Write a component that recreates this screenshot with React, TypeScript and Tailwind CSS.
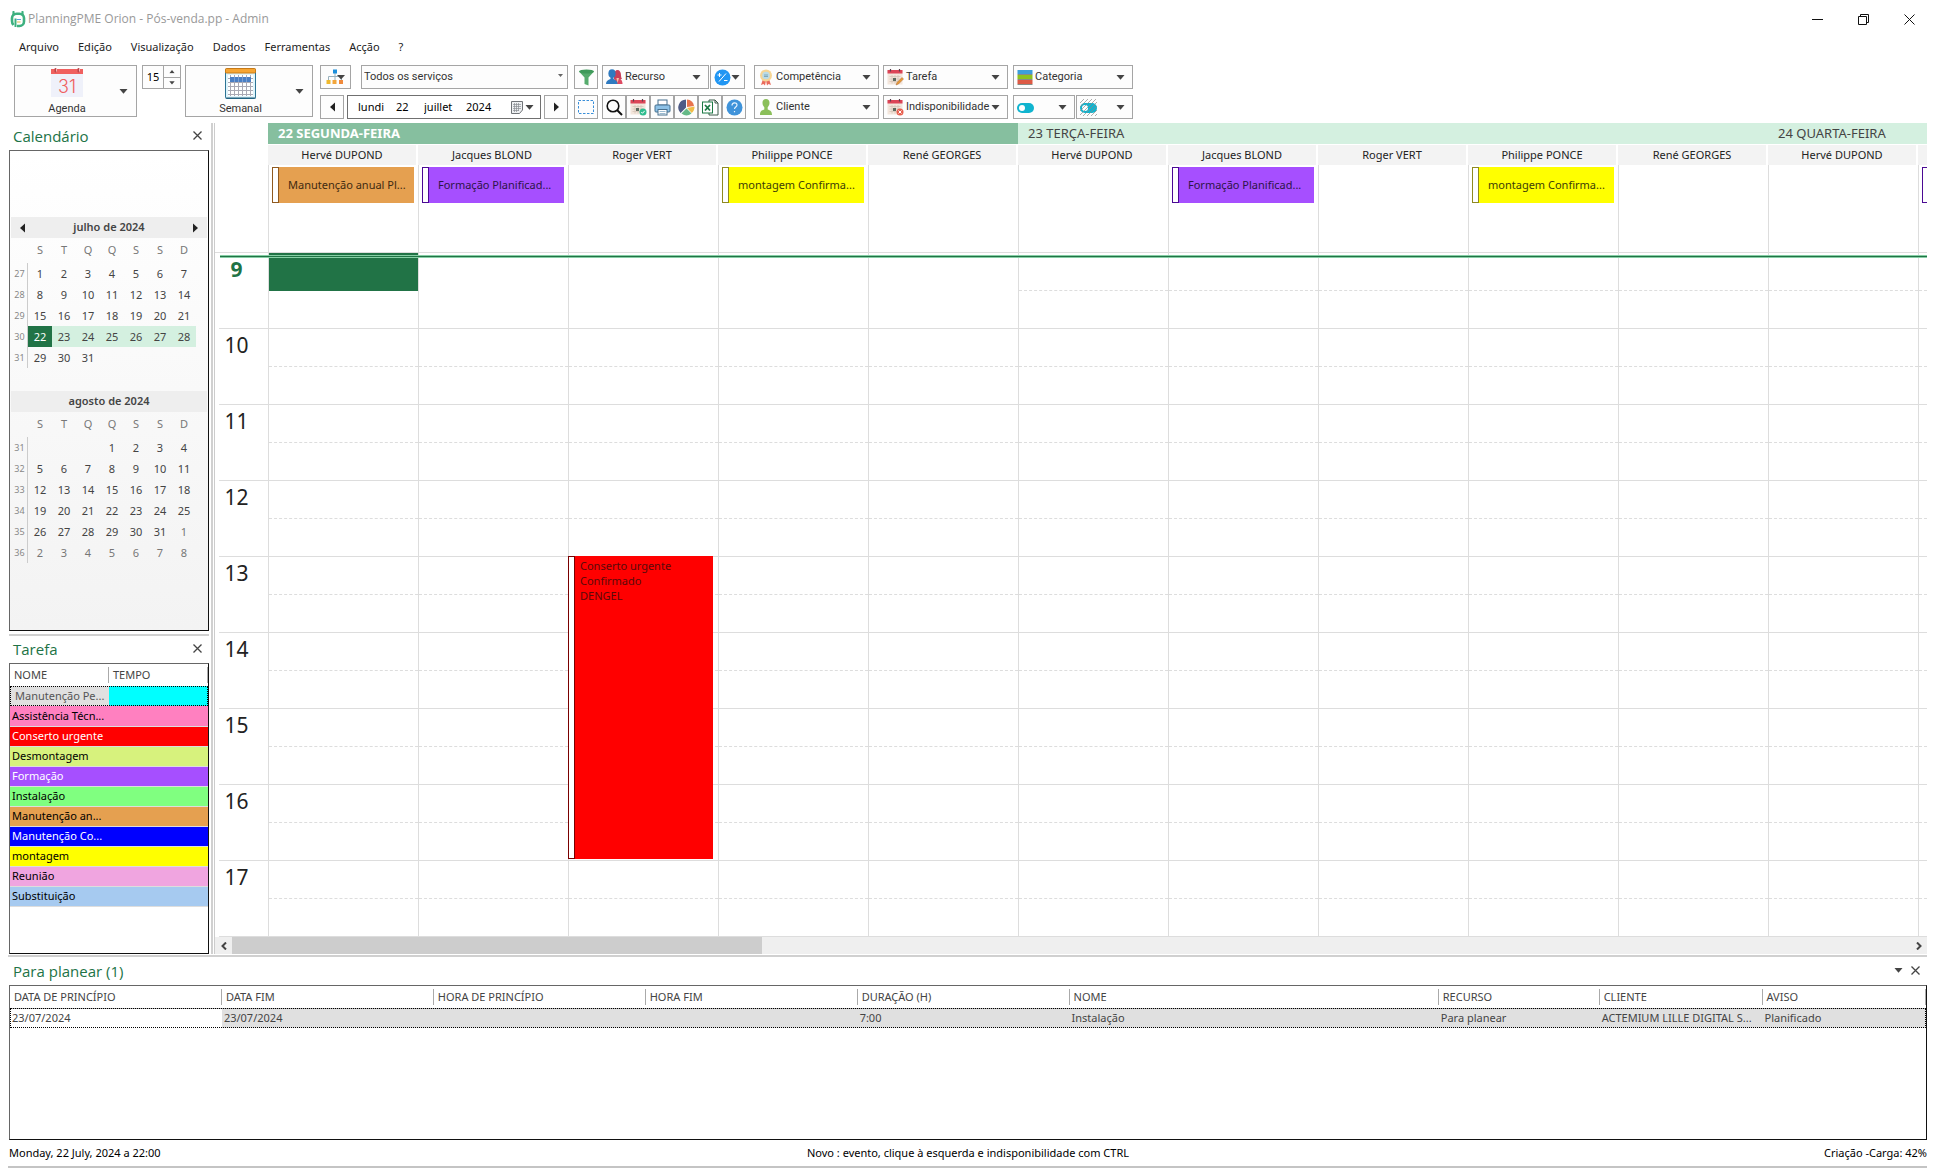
import React from 'react';

interface CalendarEvent {
  title: string;
  bg: string;
  border: string;
  text: string;
}

interface Task {
  name: string;
  className: string;
}

interface Week {
  number: number;
  days: string[];
}

const MENU = ['Arquivo', 'Edição', 'Visualização', 'Dados', 'Ferramentas', 'Acção', '?'];
const WEEKDAYS = ['S', 'T', 'Q', 'Q', 'S', 'S', 'D'];

const JULY: Week[] = [
  { number: 27, days: ['1', '2', '3', '4', '5', '6', '7'] },
  { number: 28, days: ['8', '9', '10', '11', '12', '13', '14'] },
  { number: 29, days: ['15', '16', '17', '18', '19', '20', '21'] },
  { number: 30, days: ['22', '23', '24', '25', '26', '27', '28'] },
  { number: 31, days: ['29', '30', '31', '', '', '', ''] },
];

const AUGUST: Week[] = [
  { number: 31, days: ['', '', '', '1', '2', '3', '4'] },
  { number: 32, days: ['5', '6', '7', '8', '9', '10', '11'] },
  { number: 33, days: ['12', '13', '14', '15', '16', '17', '18'] },
  { number: 34, days: ['19', '20', '21', '22', '23', '24', '25'] },
  { number: 35, days: ['26', '27', '28', '29', '30', '31', '1'] },
  { number: 36, days: ['2', '3', '4', '5', '6', '7', '8'] },
];

const TASKS: Task[] = [
  { name: 'Assistência Técn...', className: 'bg-[#ff80c0] text-black' },
  { name: 'Conserto urgente', className: 'bg-[#ff0000] text-white' },
  { name: 'Desmontagem', className: 'bg-[#d7f27d] text-black' },
  { name: 'Formação', className: 'bg-[#a64fff] text-white' },
  { name: 'Instalação', className: 'bg-[#80ff80] text-black' },
  { name: 'Manutenção an...', className: 'bg-[#e5a050] text-black' },
  { name: 'Manutenção Co...', className: 'bg-[#0000ff] text-white' },
  { name: 'montagem', className: 'bg-[#ffff00] text-black' },
  { name: 'Reunião', className: 'bg-[#f0a5e0] text-black' },
  { name: 'Substituição', className: 'bg-[#a6caf0] text-black' },
];

const MAINTENANCE: CalendarEvent = {
  title: 'Manutenção anual Pl...',
  bg: 'bg-[#e5a050]',
  border: 'border-[#8f5a20]',
  text: 'text-[#3f2a10]',
};
const TRAINING: CalendarEvent = {
  title: 'Formação Planificad...',
  bg: 'bg-[#a64fff]',
  border: 'border-[#4b0a94]',
  text: 'text-[#2d1548]',
};
const ASSEMBLY: CalendarEvent = {
  title: 'montagem Confirma...',
  bg: 'bg-[#ffff00]',
  border: 'border-[#8f8a20]',
  text: 'text-[#3d3d08]',
};

const COLUMNS: { resource: string; event?: CalendarEvent }[] = [
  { resource: 'Hervé DUPOND', event: MAINTENANCE },
  { resource: 'Jacques BLOND', event: TRAINING },
  { resource: 'Roger VERT' },
  { resource: 'Philippe PONCE', event: ASSEMBLY },
  { resource: 'René GEORGES' },
  { resource: 'Hervé DUPOND' },
  { resource: 'Jacques BLOND', event: TRAINING },
  { resource: 'Roger VERT' },
  { resource: 'Philippe PONCE', event: ASSEMBLY },
  { resource: 'René GEORGES' },
  { resource: 'Hervé DUPOND' },
  { resource: '', event: { ...TRAINING, title: '' } },
];

const HOURS = [9, 10, 11, 12, 13, 14, 15, 16, 17];

const Caret = ({ small = false }: { small?: boolean }) => (
  <svg width={small ? 6 : 9} height={small ? 4 : 5} viewBox="0 0 9 5" className="shrink-0" aria-hidden="true">
    <path d="M0.5 0h8L4.500 4.800z" fill="#444" />
  </svg>
);

const Arrow = ({ left = false }: { left?: boolean }) => (
  <svg width="5" height="10" viewBox="0 0 5 10" aria-hidden="true">
    <path d={left ? 'M5 0.500v9L0 5z' : 'M0 0.500v9L5 5z'} fill="#222" />
  </svg>
);

const CloseIcon = () => (
  <svg width="9" height="9" viewBox="0 0 9 9" aria-hidden="true">
    <path d="M0.500 0.500l8 8M8.500 0.500l-8 8" stroke="#444" strokeWidth="1.300" />
  </svg>
);

const LogoIcon = () => (
  <svg width="16" height="17" viewBox="0 0 16 17" aria-hidden="true">
    <path d="M3.500 14A6 6 0 0 1 2 10V7a4.500 4.500 0 0 1 4.500-4.200h3A4.500 4.500 0 0 1 14 7v3.500a4.500 4.500 0 0 1-4.500 4.500H7" fill="none" stroke="#3db07f" strokeWidth="2.600" />
    <path d="M3.500 1v3M12.500 1v3" stroke="#3db07f" strokeWidth="2.200" strokeLinecap="round" />
    <path d="M5.500 16V7.500" stroke="#3db07f" strokeWidth="2" />
    <path d="M7 11h3.500" stroke="#e2b84a" strokeWidth="1" />
    <path d="M6.500 8.500h4.500" stroke="#5ba4d4" strokeWidth="1" />
  </svg>
);

const AgendaIcon = () => (
  <svg width="32" height="29" viewBox="0 0 32 29" aria-hidden="true">
    <rect y="3" width="32" height="26" fill="#eff1fa" />
    <rect y="1" width="32" height="5" fill="#f0605f" />
    <path d="M4.500 1v2.500M27.500 1v2.500" stroke="#b8474c" strokeWidth="2" strokeLinecap="round" />
    <path d="M5.500 0.500v3M28.500 0.500v3" stroke="#f7b6b6" strokeWidth="1" />
    <text x="16" y="25" textAnchor="middle" fontSize="18" fontFamily="Inter, 'Liberation Sans', sans-serif" fontWeight="300" fill="#f0605f">31</text>
  </svg>
);

const WeekIcon = () => (
  <svg width="31" height="31" viewBox="0 0 31 31" aria-hidden="true">
    <rect x="0.500" y="1" width="30" height="29.500" rx="1" fill="#dff4fb" stroke="#2c7394" />
    <rect x="0.500" y="0.500" width="30" height="4.500" rx="1" fill="#f6a533" stroke="#c87a16" />
    <rect x="3" y="7" width="25" height="21" fill="#fff" />
    <path d="M3 10.500h25M3 14.500h25M3 18.500h25M3 22.500h25M3 26.500h25M5.500 7v21M9.500 7v21M13.500 7v21M17.500 7v21M21.500 7v21M25.500 7v21" stroke="#a9a9b4" strokeWidth="1" fill="none" />
    <rect x="5" y="9" width="21" height="5" fill="#4a7fc4" />
    <path d="M9.500 9v5M13.500 9v5M17.500 9v5M21.500 9v5" stroke="#7ba0d4" />
    <path d="M1 30h29.500" stroke="#1d5874" />
  </svg>
);

const TreeIcon = () => (
  <svg width="20" height="16" viewBox="0 0 20 16" aria-hidden="true">
    <path d="M2.500 11V7.500h13V11M9 3v8" stroke="#9bb2bd" fill="none" />
    <rect x="7" y="0.500" width="4" height="4" fill="#1c8fdc" />
    <rect x="0.500" y="11" width="4" height="4" fill="#efb92e" />
    <rect x="6.500" y="11" width="4" height="4" fill="#f2a63c" />
    <rect x="13" y="11" width="4" height="4" fill="#f08a3c" />
    <path d="M11 6h8l-4 4.500z" fill="#444" />
  </svg>
);

const FunnelIcon = () => (
  <svg width="17" height="17" viewBox="0 0 17 17" aria-hidden="true">
    <path d="M1 2.500l5.500 6V15l4 1.500v-8l5.500-6z" fill="#56ab6d" />
    <ellipse cx="8.500" cy="2.500" rx="7.500" ry="2" fill="#3f9a5a" />
  </svg>
);

const PeopleIcon = () => (
  <svg width="17" height="16" viewBox="0 0 17 16" className="shrink-0" aria-hidden="true">
    <path d="M8 6c0-3 1.500-5 3.500-5s3.500 2 3.500 5c0 2 .5 3 1 4H8z" fill="#c9405a" />
    <path d="M7 15c0-4 2-6 4.500-6s5 2 5 6z" fill="#dd4a62" />
    <path d="M10.500 9l1 5 1.500-5z" fill="#f3c7a8" />
    <ellipse cx="6" cy="4.500" rx="3.600" ry="4.300" fill="#2f7ac0" />
    <path d="M0 15c0-3 2-4 4.500-5V7h3v3c2 1 4 2 4 5z" fill="#2f7ac0" />
  </svg>
);

const PercentIcon = () => (
  <svg width="17" height="17" viewBox="0 0 17 17" className="shrink-0" aria-hidden="true">
    <circle cx="8.500" cy="8.500" r="8" fill="#2196f3" />
    <path d="M5 12.500l7-8M3.500 6h4M5.500 4v4M10 11.500h3.500" stroke="#fff" strokeWidth="1" />
  </svg>
);

const MedalIcon = () => (
  <svg width="16" height="17" viewBox="0 0 16 17" className="shrink-0" aria-hidden="true">
    <path d="M5 10l-2 6 2.500-1 1.500 1.500 1-5 1 5 1.500-1.500 2.500 1-2-6z" fill="#ea6b5c" />
    <circle cx="8" cy="6.500" r="6" fill="#f7d594" />
    <circle cx="8" cy="6.500" r="3.800" fill="#bcdbe6" />
    <path d="M6 6h4M6 7.500h4" stroke="#6f9cb0" strokeWidth="0.800" />
  </svg>
);

const SheetIcon = ({ badge }: { badge: 'ok' | 'edit' | 'deny' }) => (
  <svg width="17" height="17" viewBox="0 0 17 17" className="shrink-0" aria-hidden="true">
    <rect x="0.500" y="1.500" width="15" height="14" fill="#f3e6dc" />
    <rect x="0.500" y="1" width="15" height="3.500" fill="#dc4557" />
    <path d="M3.500 0v2.500M12.500 0v2.500" stroke="#5c3d4a" strokeWidth="1.200" />
    <path d="M2.500 7.500h11M2.500 10h11M2.500 12.500h11M5 6v8.500M8 6v8.500M11 6v8.500" stroke="#d5c5b8" strokeWidth="0.800" />
    <rect x="6" y="9" width="3" height="3" fill="#5d6b60" />
    {badge === 'ok' && (
      <>
        <circle cx="13" cy="13" r="3.500" fill="#2ebd8f" />
        <path d="M11.300 13l1.200 1.300 2.200-2.500" stroke="#fff" fill="none" />
      </>
    )}
    {badge === 'edit' && <path d="M9 16l1-2.500 5-5 1.500 1.500-5 5z" fill="#e99a35" stroke="#a86a3c" strokeWidth="0.500" />}
    {badge === 'deny' && (
      <>
        <circle cx="13" cy="13" r="3.500" fill="#e8604f" />
        <path d="M11.500 11.500l3 3M14.500 11.500l-3 3" stroke="#fff" />
      </>
    )}
  </svg>
);

const StackIcon = () => (
  <svg width="16" height="16" viewBox="0 0 16 16" className="shrink-0" aria-hidden="true">
    <rect x="0.500" y="1" width="15" height="4" fill="#3d9fda" />
    <rect x="0.500" y="6" width="15" height="4" fill="#8fc31f" />
    <rect x="0.500" y="11" width="15" height="4" fill="#dd5a45" />
    <path d="M0.500 5.500h15M0.500 10.500h15M0.500 15.500h15" stroke="#6b6f66" strokeWidth="0.800" />
  </svg>
);

const ClientIcon = () => (
  <svg width="16" height="16" viewBox="0 0 14 16" className="shrink-0" aria-hidden="true">
    <path d="M7 0c2.200 0 3.500 1.500 3.500 3.800 0 2-.7 3.500-1.800 4.400v2.300c2.300.8 4.300 1.500 4.300 5.500H1c0-4 2-4.700 4.300-5.500V8.200C4.200 7.300 3.500 5.800 3.500 3.800 3.500 1.500 4.800 0 7 0z" fill="#8bbf5a" />
  </svg>
);

const SwitchIcon = ({ hatched = false }: { hatched?: boolean }) => (
  <svg width="17" height="17" viewBox="0 0 17 17" className="shrink-0" aria-hidden="true">
    <rect y="4" width="17" height="10" rx="5" fill="#10b4cf" />
    <circle cx="5" cy="9" r="3" fill="#fff" />
    {hatched && (
      <path d="M0 4l4-4M0 8l8-8M0 12l12-12M0 16l16-16M3 17L17 3M7 17L17 7M11 17l6-6M15 17l2-2" stroke="#8a8a8a" strokeWidth="0.700" />
    )}
  </svg>
);

const MarqueeIcon = () => (
  <svg width="16" height="14" viewBox="0 0 16 14" aria-hidden="true">
    <rect x="0.500" y="0.500" width="15" height="13" fill="none" stroke="#3a8fd9" strokeDasharray="2.500 1.500" />
  </svg>
);

const SearchIcon = () => (
  <svg width="17" height="17" viewBox="0 0 17 17" aria-hidden="true">
    <circle cx="7" cy="7" r="5.800" fill="none" stroke="#111" strokeWidth="1.600" />
    <path d="M11 11l5 5" stroke="#111" strokeWidth="2" />
  </svg>
);

const PrinterIcon = () => (
  <svg width="17" height="17" viewBox="0 0 17 17" aria-hidden="true">
    <rect x="4" y="1" width="9" height="5" fill="#fff" stroke="#47708f" />
    <rect x="1" y="6" width="15" height="7" rx="1" fill="#8cc1e6" stroke="#47708f" />
    <rect x="4" y="10.500" width="9" height="5.500" fill="#fff" stroke="#47708f" />
    <path d="M5.500 12.500h6M5.500 14.500h6" stroke="#9bbbd1" />
  </svg>
);

const PieIcon = () => (
  <svg width="17" height="17" viewBox="0 0 17 17" aria-hidden="true">
    <path d="M9 8V0.500A7.800 7.800 0 0 1 16 7z" fill="#e8734c" />
    <path d="M8 8.500V0.500A8 8 0 0 0 2.500 14z" fill="#4f5b86" />
    <path d="M9 9l7.500-1.500a8 8 0 0 1-2.700 6.500z" fill="#f0bd48" />
    <path d="M8.500 9.500l5 5a8 8 0 0 1-10 0z" fill="#65b987" />
  </svg>
);

const ExcelIcon = () => (
  <svg width="17" height="17" viewBox="0 0 17 17" aria-hidden="true">
    <path d="M7 1h6l3 3v12H7z" fill="#fff" stroke="#3c5a4a" />
    <path d="M13 1v3h3" fill="none" stroke="#3c5a4a" />
    <rect x="0.500" y="3" width="10" height="11" fill="#fff" stroke="#1d7a45" />
    <path d="M3 6l5 5.500M8 6l-5 5.500" stroke="#1d7a45" strokeWidth="1.800" />
  </svg>
);

const HelpIcon = () => (
  <svg width="17" height="17" viewBox="0 0 17 17" aria-hidden="true">
    <circle cx="8.500" cy="8.500" r="8" fill="#3f93da" />
    <path d="M6 6.500c0-3.500 5-3.500 5-.5 0 2-2.500 2-2.500 4M8.500 12v1.300" fill="none" stroke="#e8f4ff" strokeWidth="1.200" />
  </svg>
);

const DateIcon = () => (
  <svg width="12" height="13" viewBox="0 0 12 13" className="shrink-0" aria-hidden="true">
    <path d="M0.500 0.500h11v8.500l-3 3.500h-8z" fill="#eef0f2" stroke="#707478" />
    <path d="M2 3.500h8M2 5.500h8M2 7.500h8M2 9.500h6M3.500 2v9M5.500 2v9M7.500 2v8" stroke="#8a8e94" strokeWidth="0.700" />
  </svg>
);

const toolBorder = 'border border-[#a5a5a5] bg-[#fdfdfd]';

const IconButton = ({ label, children }: { label: string; children: React.ReactNode }) => (
  <button aria-label={label} className={`flex h-6 w-6 items-center justify-center ${toolBorder}`}>
    {children}
  </button>
);

const DropButton = ({
  label,
  width,
  icon,
  showLabel = true,
}: {
  label: string;
  width: string;
  icon: React.ReactNode;
  showLabel?: boolean;
}) => (
  <button aria-haspopup="menu" aria-label={label} className={`flex h-6 items-center gap-0.5 pr-[7px] pl-[3px] ${width} ${toolBorder}`}>
    {icon}
    {showLabel && <span className="whitespace-nowrap">{label}</span>}
    <span className="ml-auto">
      <Caret />
    </span>
  </button>
);

const Toolbar = () => (
  <div className="flex items-start px-3.5 pt-2 font-[Roboto,sans-serif] text-[#333]">
    <button aria-haspopup="menu" className={`flex h-[52px] w-[123px] items-center pr-2 ${toolBorder}`}>
      <span className="flex flex-1 flex-col items-center pt-0.5">
        <AgendaIcon />
        <span className="mt-1 leading-4">Agenda</span>
      </span>
      <Caret />
    </button>
    <div className={`ml-[5px] flex h-6 w-[39px] ${toolBorder}`}>
      <input aria-label="Intervalo em minutos" defaultValue="15" className="w-5 min-w-0 flex-1 bg-transparent text-center font-['Noto_Sans',sans-serif] text-black outline-none" />
      <div className="flex w-[17px] flex-col border-l border-[#a5a5a5]">
        <button aria-label="Aumentar" className="flex flex-1 rotate-180 items-center justify-center">
          <Caret small />
        </button>
        <button aria-label="Diminuir" className="flex flex-1 items-center justify-center border-t border-[#a5a5a5]">
          <Caret small />
        </button>
      </div>
    </div>
    <button aria-haspopup="menu" className={`ml-1 flex h-[52px] w-32 items-center pr-2 ${toolBorder}`}>
      <span className="flex flex-1 flex-col items-center pt-0.5">
        <WeekIcon />
        <span className="mt-0.5 leading-4">Semanal</span>
      </span>
      <Caret />
    </button>

    <div className="ml-[7px] flex flex-col gap-1.5">
      <div className="flex gap-2.5">
        <button aria-label="Serviços" className={`flex h-6 w-[31px] items-center justify-center ${toolBorder}`}>
          <TreeIcon />
        </button>
        <div className={`relative flex h-6 w-[207px] items-center ${toolBorder}`}>
          <select aria-label="Serviço" className="h-full w-full appearance-none bg-transparent pl-0.5 outline-none">
            <option>Todos os serviços</option>
          </select>
          <span className="pointer-events-none absolute top-2 right-1">
            <svg width="5" height="3" viewBox="0 0 5 3" aria-hidden="true">
              <path d="M0 0h5L2.500 3z" fill="#666" />
            </svg>
          </span>
        </div>
      </div>
      <div className="flex gap-[3px]">
        <IconButton label="Anterior">
          <Arrow left />
        </IconButton>
        <div className="flex h-6 w-[194px] items-center gap-1 border border-[#707070] bg-white pr-1.5 pl-2.5 font-['Noto_Sans',sans-serif] text-black">
          <input aria-label="Dia da semana" defaultValue="lundi" className="w-[34px] bg-transparent outline-none" />
          <input aria-label="Dia" defaultValue="22" className="w-6 bg-transparent outline-none" />
          <input aria-label="Mês" defaultValue="juillet" className="w-[38px] bg-transparent outline-none" />
          <input aria-label="Ano" defaultValue="2024" className="w-9 bg-transparent outline-none" />
          <button aria-label="Abrir calendário" className="ml-auto flex items-center gap-0.5">
            <DateIcon />
            <Caret />
          </button>
        </div>
        <IconButton label="Seguinte">
          <Arrow />
        </IconButton>
      </div>
    </div>

    <div className="ml-1.5 flex flex-col gap-1.5">
      <div className="flex">
        <IconButton label="Filtro">
          <FunnelIcon />
        </IconButton>
        <div className="ml-1 flex gap-px">
          <DropButton label="Recurso" width="w-[107px]" icon={<PeopleIcon />} />
          <button aria-label="Percentagem" aria-haspopup="menu" className={`flex h-6 w-[35px] items-center pl-[3px] ${toolBorder}`}>
            <PercentIcon />
            <Caret />
          </button>
        </div>
      </div>
      <div className="flex">
        <IconButton label="Selecção">
          <MarqueeIcon />
        </IconButton>
        <div className="ml-1 flex">
          <IconButton label="Procurar">
            <SearchIcon />
          </IconButton>
          <IconButton label="Validar">
            <SheetIcon badge="ok" />
          </IconButton>
          <IconButton label="Imprimir">
            <PrinterIcon />
          </IconButton>
          <IconButton label="Estatísticas">
            <PieIcon />
          </IconButton>
          <IconButton label="Excel">
            <ExcelIcon />
          </IconButton>
          <IconButton label="Ajuda">
            <HelpIcon />
          </IconButton>
        </div>
      </div>
    </div>

    <div className="ml-2 flex flex-col gap-1.5">
      <DropButton label="Competência" width="w-[125px]" icon={<MedalIcon />} />
      <DropButton label="Cliente" width="w-[125px]" icon={<ClientIcon />} />
    </div>
    <div className="ml-1 flex flex-col gap-1.5">
      <DropButton label="Tarefa" width="w-[125px]" icon={<SheetIcon badge="edit" />} />
      <DropButton label="Indisponibilidade" width="w-[125px]" icon={<SheetIcon badge="deny" />} />
    </div>
    <div className="ml-[5px] flex flex-col gap-1.5">
      <DropButton label="Categoria" width="w-[120px]" icon={<StackIcon />} />
      <div className="flex gap-px">
        <DropButton label="Disponível" width="w-[62px]" icon={<SwitchIcon />} showLabel={false} />
        <DropButton label="Indisponível" width="w-[57px]" icon={<SwitchIcon hatched />} showLabel={false} />
      </div>
    </div>
  </div>
);

const dayClass = (month: string, week: Week, day: string, index: number) => {
  if (month === 'julho' && week.number === 30) {
    return index === 0 ? 'bg-[#217346] text-white' : 'bg-[#d4f0e0]';
  }
  const nextMonth = week.number === 36 || (week.number === 35 && day === '1');
  return nextMonth ? 'text-[#777]' : '';
};

const Month = ({ name, weeks, nav = false }: { name: string; weeks: Week[]; nav?: boolean }) => (
  <div>
    <div className="mx-px flex h-[21px] items-center justify-between bg-[#eeeeee] px-[9px] text-[11px] font-semibold text-[#444]">
      {nav ? <button aria-label="Mês anterior"><Arrow left /></button> : <span />}
      <span>{name} de 2024</span>
      {nav ? <button aria-label="Mês seguinte"><Arrow /></button> : <span />}
    </div>
    <table className="ml-0.5 table-fixed border-separate border-spacing-0 text-center text-[#444]">
      <thead>
        <tr className="h-[25px]">
          <th className="w-4" aria-label="Semana" />
          {WEEKDAYS.map((d, i) => (
            <th key={i} className="w-6 p-0 font-normal text-[#777]">{d}</th>
          ))}
        </tr>
      </thead>
      <tbody>
        {weeks.map((week) => (
          <tr key={week.number} className="h-[21px]">
            <th className="w-4 border-r border-[#ccc] p-0 text-[9px] leading-4 font-normal text-[#888]">{week.number}</th>
            {week.days.map((day, i) => (
              <td key={i} className={`w-6 p-0 leading-4 ${dayClass(name, week, day, i)}`}>{day}</td>
            ))}
          </tr>
        ))}
      </tbody>
    </table>
  </div>
);

const PanelTitle = ({ title, menu = false }: { title: string; menu?: boolean }) => (
  <div className="flex h-[27px] shrink-0 items-center justify-between pr-[7px] pb-0.5 pl-1">
    <h2 className="font-['Open_Sans',sans-serif] text-[15px] leading-5 text-[#217346]">{title}</h2>
    <div className="flex items-center gap-2">
      {menu && <button aria-label="Opções"><Caret /></button>}
      <button aria-label={`Fechar ${title}`}><CloseIcon /></button>
    </div>
  </div>
);

const boxBorder = 'border border-t-[#666] border-r-[#111] border-b-[#111] border-l-[#666]';

const Sidebar = () => (
  <aside className="flex w-[200px] shrink-0 flex-col">
    <PanelTitle title="Calendário" />
    <div className={`bg-linear-to-b from-white to-[#f3f3f3] pt-[66px] pb-[67px] ${boxBorder}`}>
      <Month name="julho" weeks={JULY} nav />
      <div className="h-[23px]" />
      <Month name="agosto" weeks={AUGUST} />
    </div>
    <div className="mt-[3px] h-0.5 bg-[#d0d0d0]" />
    <PanelTitle title="Tarefa" />
    <div className={`flex-1 ${boxBorder}`}>
      <table className="w-full table-fixed border-collapse text-left">
        <thead>
          <tr className="h-[22px] text-[#444]">
            <th className="w-[99px] p-0 font-normal"><span className="block border-r border-[#aaa] pl-1 leading-4">NOME</span></th>
            <th className="p-0 font-normal"><span className="block border-r border-[#aaa] pl-1 leading-4">TEMPO</span></th>
          </tr>
        </thead>
        <tbody>
          <tr className="h-5 text-[#555] outline outline-1 -outline-offset-1 outline-black outline-dotted">
            <td className="bg-[#e0e0e0] p-0 pl-[5px] leading-4 whitespace-nowrap">Manutenção Pe...</td>
            <td className="bg-[#00ffff] p-0" />
          </tr>
          {TASKS.map((task) => (
            <tr key={task.name} className={`h-5 border-b border-[#ddd] ${task.className}`}>
              <td className="p-0 pl-0.5 leading-4 whitespace-nowrap">{task.name}</td>
              <td className="p-0" />
            </tr>
          ))}
        </tbody>
      </table>
    </div>
  </aside>
);

const EventCard = ({ event }: { event: CalendarEvent }) => (
  <div className={`mr-1 ml-[3px] flex h-9 items-center ${event.bg} ${event.text}`}>
    <span className={`h-full w-[7px] shrink-0 border bg-white ${event.border}`} />
    <span className="pl-[9px] whitespace-nowrap">{event.title}</span>
  </div>
);

const Schedule = () => (
  <main className="flex min-w-0 flex-1 flex-col border-l border-[#ccc]">
    <div className="relative flex flex-1">
      <div className="flex w-[53px] shrink-0 flex-col">
        <div className="h-[130px] border-b border-[#ddd]" />
        {HOURS.map((h) => (
          <div key={h} className="ml-1 h-[76px] border-b border-[#ddd] pr-3.5 text-center text-[21px] leading-8">
            <span className={h === 9 ? 'font-bold text-[#217346]' : 'text-[#222]'}>{h}</span>
          </div>
        ))}
      </div>
      <div className="min-w-0 flex-1 overflow-hidden">
        <div className="flex h-[21px] items-center text-[13px] text-[#444]">
          <div className="flex h-full w-[750px] shrink-0 items-center bg-[#86bf9f] pl-2.5 font-bold text-white">22 SEGUNDA-FEIRA</div>
          <div className="flex h-full w-[750px] shrink-0 items-center bg-[#d4f0e0] pl-2.5">23 TERÇA-FEIRA</div>
          <div className="flex h-full flex-1 items-center bg-[#d4f0e0] pl-2.5">24 QUARTA-FEIRA</div>
        </div>
        <div className="grid auto-cols-[150px] grid-flow-col">
          {COLUMNS.map((col, i) => (
            <section key={i}>
              <h3 className="mt-px mr-0.5 h-5 bg-[#f3f3f3] text-center leading-5 text-[#222]">{col.resource}</h3>
              <div className="h-[88px] border-b border-l border-[#ddd] pt-0.5">{col.event && <EventCard event={col.event} />}</div>
              <div className="relative border-l border-[#ddd]">
                {HOURS.map((h) => (
                  <div key={h} className="h-[76px] border-b border-[#ddd]">
                    <div className={`h-[38px] ${i < 5 && h === 9 ? '' : 'border-b border-dashed border-[#ddd]'}`} />
                  </div>
                ))}
                {i === 0 && <div className="absolute top-0 right-0 left-0 h-[38px] bg-[#217346]" />}
                {i === 2 && (
                  <div className="absolute top-[303px] right-[5px] -left-px flex h-[303px] bg-[#ff0000] leading-[15px] text-[#5a0a0a]">
                    <span className="w-[7px] shrink-0 border border-[#7a0000] bg-white" />
                    <p className="pt-0.5 pl-[5px]">
                      Conserto urgente<br />Confirmado<br />DENGEL
                    </p>
                  </div>
                )}
              </div>
            </section>
          ))}
        </div>
      </div>
      {/* current time */}
      <div className="absolute top-[132px] right-0 left-[5px] h-[3px] border-y border-[#86cfa5] bg-[#217346]" />
    </div>
    <div className="flex h-[17px] items-center bg-[#efefef]">
      <button aria-label="Deslocar para a esquerda" className="flex w-[17px] justify-center">
        <svg width="6" height="8" viewBox="0 0 6 8"><path d="M5 0.500L1.500 4 5 7.500" fill="none" stroke="#444" strokeWidth="2" /></svg>
      </button>
      <div className="flex h-full flex-1">
        <div className="w-[31.6%] bg-[#cdcdcd]" />
      </div>
      <button aria-label="Deslocar para a direita" className="flex w-[17px] justify-center">
        <svg width="6" height="8" viewBox="0 0 6 8"><path d="M1 0.500L4.500 4 1 7.500" fill="none" stroke="#444" strokeWidth="2" /></svg>
      </button>
    </div>
  </main>
);

const PLAN_COLUMNS = [
  { title: 'DATA DE PRINCÍPIO', width: 'w-[11.06%]', value: '23/07/2024' },
  { title: 'DATA FIM', width: 'w-[11.06%]', value: '23/07/2024' },
  { title: 'HORA DE PRINCÍPIO', width: 'w-[11.06%]', value: '' },
  { title: 'HORA FIM', width: 'w-[11.06%]', value: '' },
  { title: 'DURAÇÃO (H)', width: 'w-[11.06%]', value: '7:00' },
  { title: 'NOME', width: 'w-[19.27%]', value: 'Instalação' },
  { title: 'RECURSO', width: 'w-[8.4%]', value: 'Para planear' },
  { title: 'CLIENTE', width: 'w-[8.5%]', value: 'ACTEMIUM LILLE DIGITAL S...' },
  { title: 'AVISO', width: 'w-[8.53%]', value: 'Planificado' },
];

const Planning = () => (
  <section className="pt-px">
    <PanelTitle title="Para planear (1)" menu />
    <div className={`min-h-[155px] ${boxBorder}`}>
      <table className="w-full table-fixed border-collapse text-left text-[#444]">
        <thead>
          <tr className="h-[22px] border-b border-[#aaa]">
            {PLAN_COLUMNS.map((c) => (
              <th key={c.title} className={`p-0 font-normal ${c.width}`}>
                <span className="block border-r border-[#aaa] pl-1 leading-4">{c.title}</span>
              </th>
            ))}
          </tr>
        </thead>
        <tbody>
          <tr className="h-5 outline outline-1 -outline-offset-1 outline-black outline-dotted">
            {PLAN_COLUMNS.map((c, i) => (
              <td key={c.title} className={`p-0 pl-0.5 leading-4 whitespace-nowrap ${i > 0 ? 'bg-[#e0e0e0]' : ''}`}>{c.value}</td>
            ))}
          </tr>
        </tbody>
      </table>
    </div>
  </section>
);

export default function App() {
  return (
    <div className="flex min-h-screen w-full flex-col bg-white pr-[9px] font-['Noto_Sans',sans-serif] text-[11px] text-[#222]">
      <header className="flex h-9 items-center pt-0.5 pr-3 pl-2.5">
        <LogoIcon />
        <h1 className="ml-0.5 font-['Open_Sans',sans-serif] text-xs text-[#999]">PlanningPME Orion - Pós-venda.pp - Admin</h1>
        <div className="ml-auto flex items-center gap-[35px]">
          <button aria-label="Minimizar">
            <svg width="11" height="11" viewBox="0 0 11 11"><path d="M0 5.500h11" stroke="#111" /></svg>
          </button>
          <button aria-label="Restaurar">
            <svg width="11" height="11" viewBox="0 0 11 11"><path d="M0.500 2.500h8v8h-8zM2.500 2.500v-2h8v8h-2" fill="none" stroke="#111" /></svg>
          </button>
          <button aria-label="Fechar">
            <svg width="11" height="11" viewBox="0 0 11 11"><path d="M0.500 0.500l10 10M10.500 0.500l-10 10" stroke="#111" /></svg>
          </button>
        </div>
      </header>
      <nav className="flex h-[21px] items-center gap-[19px] pt-0.5 pl-[19px]">
        {MENU.map((item) => (
          <a key={item} href="#">{item}</a>
        ))}
      </nav>
      <Toolbar />
      <div className="ml-[9px] flex flex-1 pt-1">
        <Sidebar />
        <div className="mr-px ml-0.5 w-0.5 bg-[#d0d0d0]" />
        <Schedule />
      </div>
      <div className="mt-px ml-2 h-0.5 bg-[#d0d0d0]" />
      <div className="ml-[9px]">
        <Planning />
        <footer className="flex h-[26px] items-center justify-between text-black">
          <span className="flex-1">Monday, 22 July, 2024 a 22:00</span>
          <span>Novo : evento, clique à esquerda e indisponibilidade com CTRL</span>
          <span className="flex-1 text-right">Criação -Carga: 42%</span>
        </footer>
      </div>
      <div className="ml-2 h-0.5 bg-[#c4c4c4]" />
    </div>
  );
}
